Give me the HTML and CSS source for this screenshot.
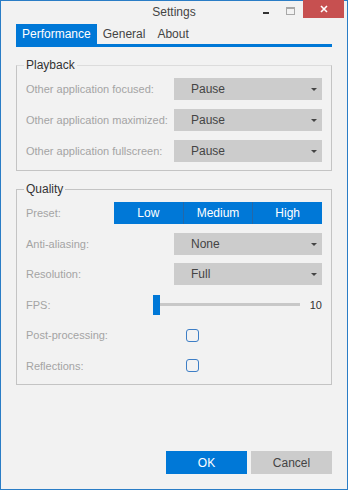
FILE: index.html
```html
<!DOCTYPE html>
<html lang="en">
<head>
    <meta charset="UTF-8">
    <meta name="viewport" content="width=device-width, initial-scale=1.0">
    <title>Settings</title>
    <link rel="stylesheet" href="styles.css">
</head>
<body>
    <div class="window">
        <div class="titlebar">
            <span class="title">Settings</span>
            <div class="controls">
                <span class="btn-min"></span>
                <span class="btn-max"></span>
                <span class="btn-close">
                    <svg width="8" height="8" viewBox="0 0 8 8"><path d="M1 1L7 7M7 1L1 7" stroke="#fff" stroke-width="1.6"/></svg>
                </span>
            </div>
        </div>

        <div class="content">
            <div class="tabs">
                <span class="tab active">Performance</span>
                <span class="tab">General</span>
                <span class="tab">About</span>
            </div>

            <fieldset class="group playback">
                <legend>Playback</legend>
                <div class="row">
                    <span class="label">Other application focused:</span>
                    <div class="select">Pause<span class="arrow"></span></div>
                </div>
                <div class="row">
                    <span class="label">Other application maximized:</span>
                    <div class="select">Pause<span class="arrow"></span></div>
                </div>
                <div class="row">
                    <span class="label">Other application fullscreen:</span>
                    <div class="select">Pause<span class="arrow"></span></div>
                </div>
            </fieldset>

            <fieldset class="group quality">
                <legend>Quality</legend>
                <div class="row">
                    <span class="label">Preset:</span>
                    <div class="segments segments-wide">
                        <span class="segment">Low</span>
                        <span class="segment">Medium</span>
                        <span class="segment">High</span>
                    </div>
                </div>
                <div class="row">
                    <span class="label">Anti-aliasing:</span>
                    <div class="select">None<span class="arrow"></span></div>
                </div>
                <div class="row">
                    <span class="label">Resolution:</span>
                    <div class="select">Full<span class="arrow"></span></div>
                </div>
                <div class="row">
                    <span class="label">FPS:</span>
                    <div class="slider">
                        <span class="thumb"></span>
                        <span class="track"></span>
                        <span class="value">10</span>
                    </div>
                </div>
                <div class="row">
                    <span class="label">Post-processing:</span>
                    <div><span class="checkbox"></span></div>
                </div>
                <div class="row">
                    <span class="label">Reflections:</span>
                    <div><span class="checkbox"></span></div>
                </div>
            </fieldset>

            <div class="footer">
                <button class="button primary">OK</button>
                <button class="button">Cancel</button>
            </div>
        </div>
    </div>
</body>
</html>
```

FILE: styles.css
```css
body {
    margin: 0;
    font-family: "Liberation Sans", Arial, sans-serif;
    background: #f2f2f2;
}
.window {
    width: 348px;
    height: 490px;
    box-sizing: border-box;
    border: 1px solid #2a7dc6;
    background: #f2f2f2;
    display: flex;
    flex-direction: column;
}
.titlebar {
    height: 22px;
    display: flex;
    justify-content: center;
    align-items: center;
    position: relative;
    font-size: 12px;
    color: #444;
}
.controls {
    position: absolute;
    top: -1px;
    right: 3px;
    display: flex;
    align-items: flex-start;
}
.btn-min {
    width: 6px;
    height: 2px;
    background: #333;
    margin: 12px 17px 0 0;
}
.btn-max {
    width: 7px;
    height: 5px;
    border: 1px solid #a8a8a8;
    border-top-width: 2px;
    margin: 7px 8px 0 0;
}
.btn-close {
    width: 41px;
    height: 18px;
    background: #c75050;
    display: flex;
    justify-content: center;
    align-items: center;
}
.content {
    flex: 1;
    display: flex;
    flex-direction: column;
    padding: 1px 15px 15px 15px;
}
.tabs {
    display: flex;
    border-bottom: 3px solid #0078d7;
    font-size: 12px;
}
.tab {
    height: 20px;
    line-height: 21px;
    padding: 0 6px;
    color: #444;
}
.tab.active {
    background: #0078d7;
    color: #fff;
}
.group {
    margin: 11px 0 0 0;
    padding: 6px 9px 8px 9px;
    border: 1px solid #c4c4c4;
    display: flex;
    flex-direction: column;
    gap: 9px;
}
.playback {
    border-top-color: #dcdcdc;
}
.quality {
    padding-bottom: 7px;
    gap: 8.6px;
}
legend {
    font-size: 12px;
    line-height: 14px;
    color: #333;
    padding: 0 2px;
    margin-left: -2px;
}
.row {
    display: grid;
    grid-template-columns: 148px 148px;
    align-items: center;
    height: 22px;
    font-size: 11px;
}
.label {
    color: #a4a4a4;
    white-space: nowrap;
}
.select {
    height: 22px;
    line-height: 22px;
    background: #cccccc;
    color: #444;
    font-size: 12px;
    padding-left: 17px;
    position: relative;
}
.arrow {
    position: absolute;
    right: 5px;
    top: 10px;
    border-left: 3px solid transparent;
    border-right: 3px solid transparent;
    border-top: 3px solid #444;
}
.segments {
    display: flex;
    height: 22px;
    background: #0078d7;
    margin-left: -60px;
}
.segment {
    flex: 1;
    text-align: center;
    line-height: 22px;
    color: #fff;
    font-size: 12px;
}
.segment + .segment {
    border-left: 1px solid #2468a8;
}
.slider {
    display: flex;
    align-items: center;
    margin-left: -21px;
}
.thumb {
    width: 7px;
    height: 20px;
    background: #0078d7;
}
.track {
    width: 140px;
    height: 3px;
    background: #c8c8c8;
}
.value {
    margin-left: auto;
    color: #333;
    font-size: 11px;
}
.checkbox {
    display: block;
    width: 11px;
    height: 11px;
    margin-left: 12px;
    border: 1.5px solid #3d7ec6;
    border-radius: 3px;
}
.footer {
    margin-top: auto;
    display: flex;
    justify-content: flex-end;
    gap: 4px;
}
.button {
    width: 81px;
    height: 23px;
    border: none;
    background: #cccccc;
    color: #444;
    font-family: "Liberation Sans", Arial, sans-serif;
    font-size: 12px;
}
.button.primary {
    background: #0078d7;
    color: #fff;
}
```
